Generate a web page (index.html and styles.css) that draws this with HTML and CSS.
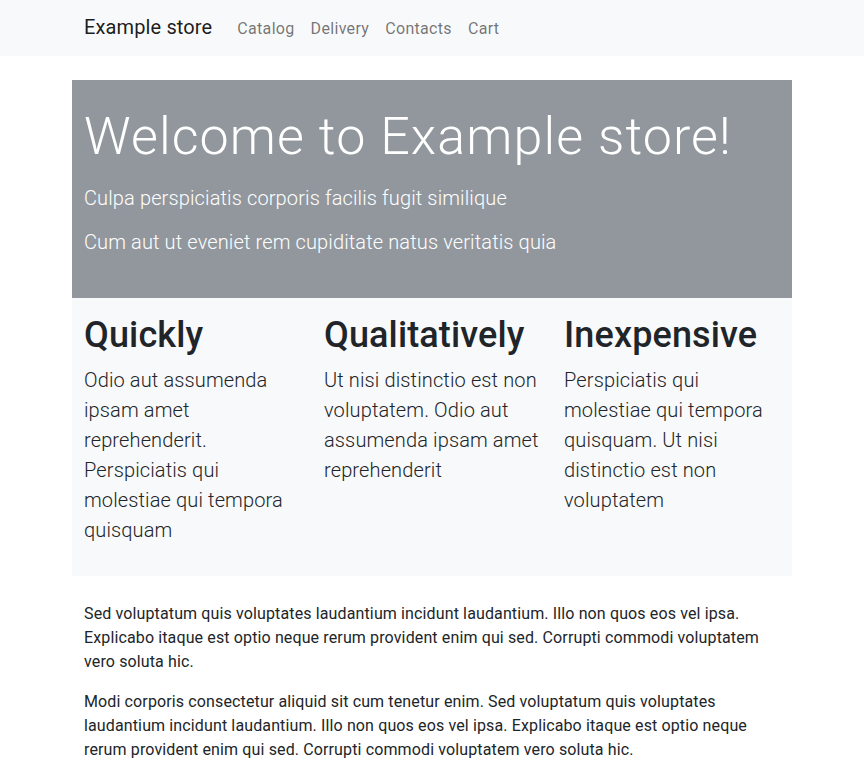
FILE: index.html
```html
<!DOCTYPE html>
<html lang="en">
<head>
<meta charset="utf-8">
<title>Example store</title>
<link rel="stylesheet" href="styles.css">
</head>
<body>
<nav class="navbar">
  <div class="nav-inner">
    <a class="brand" href="#">Example store</a>
    <ul class="nav-links">
      <li><a href="#">Catalog</a></li>
      <li><a href="#">Delivery</a></li>
      <li><a href="#">Contacts</a></li>
      <li><a href="#">Cart</a></li>
    </ul>
  </div>
</nav>
<main class="page">
  <section class="hero">
    <h1 class="hero-title">Welcome to Example store!</h1>
    <p class="lead">Culpa perspiciatis corporis facilis fugit similique</p>
    <p class="lead">Cum aut ut eveniet rem cupiditate natus veritatis quia</p>
  </section>
  <section class="features">
    <div class="feature">
      <h2 class="feature-title">Quickly</h2>
      <p class="feature-text">Odio aut assumenda ipsam amet reprehenderit. Perspiciatis qui molestiae qui tempora quisquam</p>
    </div>
    <div class="feature">
      <h2 class="feature-title">Qualitatively</h2>
      <p class="feature-text">Ut nisi distinctio est non voluptatem. Odio aut assumenda ipsam amet reprehenderit</p>
    </div>
    <div class="feature">
      <h2 class="feature-title">Inexpensive</h2>
      <p class="feature-text">Perspiciatis qui molestiae qui tempora quisquam. Ut nisi distinctio est non voluptatem</p>
    </div>
  </section>
  <section class="about">
    <p>Sed voluptatum quis voluptates laudantium incidunt laudantium. Illo non quos eos vel ipsa. Explicabo itaque est optio neque rerum provident enim qui sed. Corrupti commodi voluptatem vero soluta hic.</p>
    <p>Modi corporis consectetur aliquid sit cum tenetur enim. Sed voluptatum quis voluptates laudantium incidunt laudantium. Illo non quos eos vel ipsa. Explicabo itaque est optio neque rerum provident enim qui sed. Corrupti commodi voluptatem vero soluta hic.</p>
  </section>
</main>
</body>
</html>
```
FILE: styles.css
```css
* { box-sizing: border-box; }

html, body {
  margin: 0;
  padding: 0;
}

body {
  font-family: Roboto, "Liberation Sans", sans-serif;
  font-size: 16px;
  line-height: 24px;
  color: #212529;
  background: #fff;
  letter-spacing: 0.008em;
}

a { text-decoration: none; }

.navbar {
  background: #f8f9fa;
  height: 56px;
}

.nav-inner {
  width: 720px;
  margin: 0 auto;
  padding: 12px 12px 14px;
  display: flex;
  align-items: baseline;
}

.brand {
  font-size: 20px;
  line-height: 30px;
  color: rgba(0, 0, 0, 0.9);
  margin-right: 17px;
}

.nav-links {
  list-style: none;
  margin: 0;
  padding: 0;
  display: flex;
}

.nav-links a {
  display: block;
  padding: 0 8px;
  font-size: 16px;
  line-height: 24px;
  color: rgba(0, 0, 0, 0.55);
  letter-spacing: 0.02em;
}

.page {
  width: 720px;
  margin: 24px auto 0;
}

.hero {
  background: #91979d;
  color: #fff;
  padding: 26px 12px 27px;
}

.hero-title {
  margin: 0 0 15px;
  font-size: 52px;
  line-height: 62px;
  font-weight: 300;
  letter-spacing: 1.1px;
}

.lead {
  margin: 0 0 14px;
  font-size: 20px;
  line-height: 30px;
  font-weight: 300;
}

.features {
  background: #f8f9fa;
  display: grid;
  grid-template-columns: repeat(3, 1fr);
  padding: 16px 0 15px;
}

.feature {
  padding: 0 12px;
}

.feature-title {
  margin: 0 0 8px;
  font-size: 36px;
  line-height: 43px;
  font-weight: 500;
}

.feature-text {
  margin: 0 0 16px;
  font-size: 20px;
  line-height: 30px;
  font-weight: 300;
}

.about {
  padding: 26px 12px 0;
}

.about p {
  margin: 0 0 16px;
}
```
